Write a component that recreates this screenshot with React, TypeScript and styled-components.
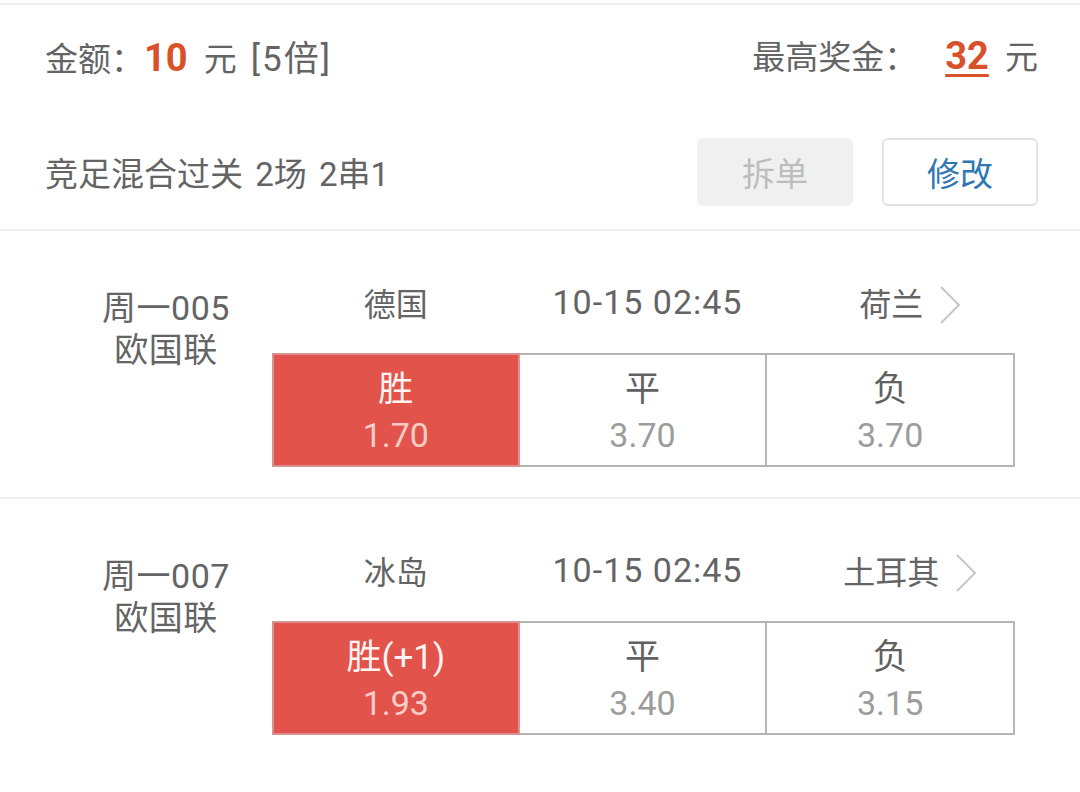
import React from 'react';
import styled, { createGlobalStyle } from 'styled-components';

const GlobalStyle = createGlobalStyle`
	html, body {
		margin: 0;
		background: #ffffff;
	}
	body {
		font-family: Roboto, "Noto Sans CJK SC", "Noto Sans", sans-serif;
		color: #646464;
	}
`;

const Page = styled.div`
	width: 1080px;
	margin-top: 3px;
	border-top: 2px solid #ececec;
`;

const Summary = styled.section`
	padding: 0 42px 0 45px;
	border-bottom: 2px solid #efefef;
`;

const SummaryRow = styled.div<{ $height: number; $lift?: number }>`
	display: flex;
	align-items: center;
	justify-content: space-between;
	box-sizing: border-box;
	height: ${p => p.$height}px;
	padding-bottom: ${p => p.$lift ?? 0}px;
	font-size: 33px;
	word-spacing: 4px;
	white-space: pre;
`;

const Amount = styled.span<{ $underline?: boolean }>`
	color: #d8512a;
	font-weight: 700;
	font-size: 38px;
	margin: 0 ${p => (p.$underline ? '4px' : '4px')} 0 ${p => (p.$underline ? '28px' : '0')};
	text-decoration: ${p => (p.$underline ? 'underline' : 'none')};
	text-decoration-thickness: 3px;
	text-underline-offset: 5px;
`;

const Multiple = styled.span`
	margin-left: 14px;
	font-size: 35px;
	letter-spacing: 2px;
`;

const Actions = styled.div`
	display: flex;
	gap: 29px;
`;

const ActionButton = styled.button<{ $disabled?: boolean }>`
	width: 156px;
	height: 68px;
	border-radius: 6px;
	font-family: inherit;
	font-size: 33px;
	border: 2px solid ${p => (p.$disabled ? '#f0f0f0' : '#e3e3e3')};
	background: ${p => (p.$disabled ? '#f0f0f0' : '#ffffff')};
	color: ${p => (p.$disabled ? '#bdbdbd' : '#2e77b3')};
	padding: 0;
`;

const Match = styled.section<{ $last?: boolean }>`
	display: flex;
	height: 268px;
	box-sizing: border-box;
	padding-top: 46px;
	border-bottom: 2px solid ${p => (p.$last ? 'transparent' : '#efefef')};
`;

const League = styled.div`
	width: 212px;
	margin-left: 60px;
	margin-top: 10px;
	text-align: center;
	font-size: 34px;
	line-height: 42px;
	letter-spacing: 0.5px;
`;

const Board = styled.div`
	width: 743px;
`;

const Teams = styled.div`
	display: grid;
	grid-template-columns: repeat(3, 1fr);
	height: 50px;
	align-items: center;
	text-align: center;
	font-size: 32px;
	margin-bottom: 26px;
`;

const Kickoff = styled.span`
	padding-left: 8px;
	font-size: 34px;
	letter-spacing: 1px;
`;

const Away = styled.span`
	position: relative;
`;

const Chevron = styled.svg`
	position: absolute;
	left: calc(100% + 15px);
	top: 50%;
	transform: translateY(-50%);
`;

const Odds = styled.div`
	display: grid;
	grid-template-columns: repeat(3, 1fr);
	height: 114px;
`;

const Cell = styled.div<{ $selected?: boolean }>`
	box-sizing: border-box;
	padding-top: 14px;
	text-align: center;
	border: 2px solid ${p => (p.$selected ? '#d6928f' : '#b5b5b5')};
	border-left-width: 0;
	background: ${p => (p.$selected ? '#e2534c' : '#ffffff')};

	&:first-child {
		border-left-width: 2px;
	}
`;

const Outcome = styled.div<{ $selected?: boolean }>`
	font-size: 35px;
	line-height: 42px;
	color: ${p => (p.$selected ? '#fff4f1' : '#616161')};
`;

const Price = styled.div<{ $selected?: boolean }>`
	font-size: 34px;
	line-height: 48px;
	color: ${p => (p.$selected ? '#f8cdc6' : '#9c9c9c')};
`;

type Pick = { label: string; odds: string; selected?: boolean };

type MatchData = {
	code: string;
	league: string;
	home: string;
	time: string;
	away: string;
	picks: Pick[];
};

const MATCHES: MatchData[] = [
	{
		code: '周一005',
		league: '欧国联',
		home: '德国',
		time: '10-15 02:45',
		away: '荷兰',
		picks: [
			{ label: '胜', odds: '1.70', selected: true },
			{ label: '平', odds: '3.70' },
			{ label: '负', odds: '3.70' },
		],
	},
	{
		code: '周一007',
		league: '欧国联',
		home: '冰岛',
		time: '10-15 02:45',
		away: '土耳其',
		picks: [
			{ label: '胜(+1)', odds: '1.93', selected: true },
			{ label: '平', odds: '3.40' },
			{ label: '负', odds: '3.15' },
		],
	},
];

function MatchRow({ match, last }: { match: MatchData; last?: boolean }) {
	return (
		<Match $last={last}>
			<League>
				<div>{match.code}</div>
				<div>{match.league}</div>
			</League>
			<Board>
				<Teams>
					<span>{match.home}</span>
					<Kickoff>{match.time}</Kickoff>
					<span>
						<Away>
							{match.away}
							<Chevron width="24" height="40" viewBox="0 0 24 40">
								<polyline points="3,2 21,20 3,38" fill="none" stroke="#c6c6c6" strokeWidth="2" />
							</Chevron>
						</Away>
					</span>
				</Teams>
				<Odds>
					{match.picks.map(pick => (
						<Cell key={pick.label} $selected={pick.selected}>
							<Outcome $selected={pick.selected}>{pick.label}</Outcome>
							<Price $selected={pick.selected}>{pick.odds}</Price>
						</Cell>
					))}
				</Odds>
			</Board>
		</Match>
	);
}

function App() {
	return (
		<Page>
			<GlobalStyle />
			<Summary>
				<SummaryRow $height={110} $lift={10}>
					<span>
						金额：<Amount>10</Amount> 元<Multiple>[5倍]</Multiple>
					</span>
					<span>
						最高奖金：<Amount $underline>32</Amount> 元
					</span>
				</SummaryRow>
				<SummaryRow $height={114}>
					<span>竞足混合过关 2场 2串1</span>
					<Actions>
						<ActionButton $disabled>拆单</ActionButton>
						<ActionButton>修改</ActionButton>
					</Actions>
				</SummaryRow>
			</Summary>
			{MATCHES.map((m, i) => (
				<MatchRow key={m.code} match={m} last={i === MATCHES.length - 1} />
			))}
		</Page>
	);
}

export default App;
